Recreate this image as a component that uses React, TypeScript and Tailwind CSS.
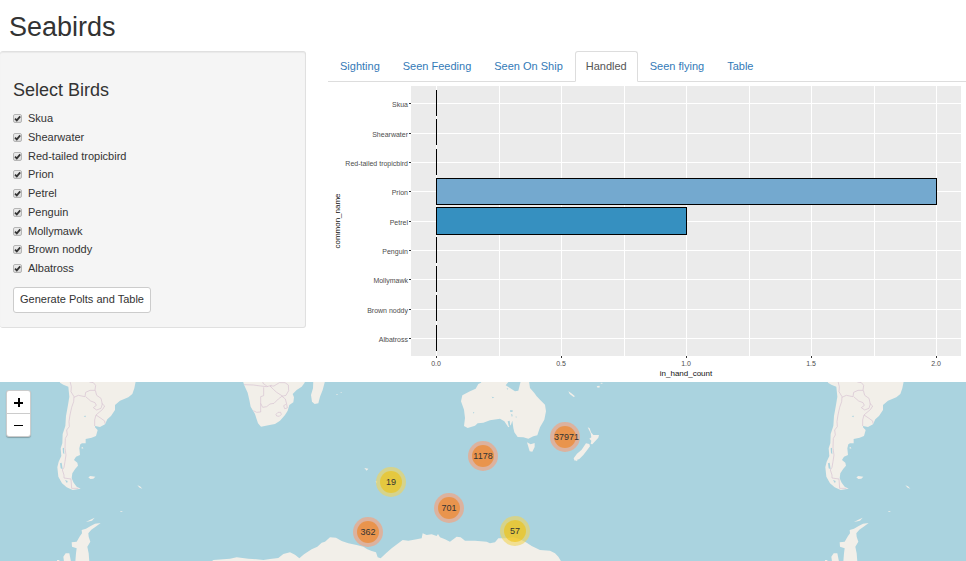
import { useState } from "react";

const birds = [
  "Skua",
  "Shearwater",
  "Red-tailed tropicbird",
  "Prion",
  "Petrel",
  "Penguin",
  "Mollymawk",
  "Brown noddy",
  "Albatross",
];

const tabs = ["Sighting", "Seen Feeding", "Seen On Ship", "Handled", "Seen flying", "Table"];

function BirdCheckbox({ name }: { name: string }) {
  return (
    <label className="flex items-center gap-[6px] leading-[15px]">
      <span className="grid shrink-0 place-items-center">
        <input
          type="checkbox"
          defaultChecked
          className="peer col-start-1 row-start-1 size-[9px] appearance-none rounded-[2px] border border-[#b5b5b5] bg-linear-to-b from-[#ececec] to-[#d9d9d9]"
        />
        <svg
          viewBox="0 0 9 9"
          className="pointer-events-none invisible col-start-1 row-start-1 size-[9px] peer-checked:visible"
          aria-hidden="true"
        >
          <path d="M2 4.6 3.8 6.4 7.2 2.4" fill="none" stroke="#333" strokeWidth="1.7" />
        </svg>
      </span>
      {name}
    </label>
  );
}

function Sidebar() {
  return (
    <form
      className="w-[306px] shrink-0 self-start rounded-[3px] border border-l-0 border-[#e0e0e0] bg-[#f5f5f5] pt-[27px] pr-3 pb-[14px] pl-[13px] shadow-[inset_0_1px_1px_rgba(0,0,0,0.05)]"
      onSubmit={(e) => e.preventDefault()}
    >
      <h2 className="text-[18px] leading-[22px] font-normal">Select Birds</h2>
      <fieldset className="mt-[10px] flex h-[165px] flex-col justify-between">
        {birds.map((b) => (
          <BirdCheckbox key={b} name={b} />
        ))}
      </fieldset>
      <button
        type="submit"
        className="mt-[11px] h-[26px] rounded-[3px] border border-[#ccc] bg-white px-[6px] pb-px leading-[15px]"
      >
        Generate Polts and Table
      </button>
    </form>
  );
}

const rowY = [21, 51, 80, 109, 139, 168, 197, 227, 256];
const barTop = [8, 37, 67, 96, 125, 155, 184, 213, 243];
const gridX = [108, 171, 233, 296, 358, 421, 483, 546, 608];
const counts = [0, 0, 0, 2, 1, 0, 0, 0, 0];
const fills = ["", "", "", "#74a9cf", "#3690c0", "", "", "", ""];

function HandledChart() {
  return (
    <svg
      viewBox="0 0 638 300"
      className="block h-auto w-full"
      role="img"
      aria-label="in_hand_count by common_name"
      fontFamily='"Liberation Sans", Arial, sans-serif'
    >
      <g shapeRendering="crispEdges">
        <rect x="83" y="4" width="550" height="270" fill="#ebebeb" />
        {gridX.map((x) => (
          <rect key={x} x={x} y="4" width="1" height="270" fill="#fff" />
        ))}
        {rowY.map((y) => (
          <g key={y}>
            <rect x="83" y={y} width="550" height="1" fill="#fff" />
            <rect x="81" y={y} width="2" height="1" fill="#333" />
          </g>
        ))}
        {[108, 233, 358, 483, 608].map((x) => (
          <rect key={x} x={x} y="274" width="1" height="2" fill="#333" />
        ))}
        {counts.map((c, i) =>
          c === 0 ? (
            <rect key={i} x="108" y={barTop[i]} width="1" height="26" fill="#000" />
          ) : (
            <rect
              key={i}
              x="108.5"
              y={barTop[i] + 0.5}
              width={c * 250}
              height={i === 4 ? 27 : 26}
              fill={fills[i]}
              stroke="#000"
            />
          ),
        )}
      </g>
      <g fontSize="7" fill="#4d4d4d">
        {birds.map((b, i) => (
          <text key={b} x="80" y={rowY[i] + 4} textAnchor="end">
            {b}
          </text>
        ))}
        {["0.0", "0.5", "1.0", "1.5", "2.0"].map((t, i) => (
          <text key={t} x={108 + i * 125} y="284" textAnchor="middle">
            {t}
          </text>
        ))}
      </g>
      <g fontSize="8" fill="#111">
        <text x="358" y="294" textAnchor="middle">
          in_hand_count
        </text>
        <text transform="translate(12 139) rotate(-90)" textAnchor="middle">
          common_name
        </text>
      </g>
    </svg>
  );
}

function ChartPanel() {
  const [active, setActive] = useState("Handled");
  return (
    <main className="min-w-0 flex-1">
      <div role="tablist" className="flex h-[31px] gap-px border-b border-[#ddd] pl-px">
        {tabs.map((t) => (
          <button
            key={t}
            type="button"
            role="tab"
            aria-selected={t === active}
            onClick={() => setActive(t)}
            className={
              t === active
                ? "h-[31px] rounded-t-[3px] border border-[#ddd] border-b-white bg-white px-[10px] text-[#555]"
                : "h-[31px] rounded-t-[3px] border border-transparent px-[10px] text-[#337ab7]"
            }
          >
            {t}
          </button>
        ))}
      </div>
      <HandledChart />
    </main>
  );
}

function World() {
  return (
    <g>
      {/* South America */}
      <g transform="translate(0 -2) scale(0.33333)">
        <path d="M178,0 L180,8 190,14 205,20 208,50 204,75 198,108 196,138 188,162 187,190 182,205 184,228 176,245 172,262 175,290 186,310 200,322 218,330 242,326 230,320 221,308 215,295 217,280 226,266 234,257 232,248 222,240 228,230 240,225 238,205 241,193 246,190 257,190 257,177 275,173 288,168 293,150 285,142 285,138 300,141 315,133 322,118 333,108 345,90 345,75 360,62 385,52 397,42 403,25 408,0 Z" />
        <path d="M265,292 l6,-4 15,2 -6,6 -9,1z M412,316 l8,3 7,7 -8,-3z M243,204 l5,-3 2,5z M258,426 l10,-5 16,-8 -8,9z M300,404 l10,-2 M361,394 h6v2h-6z" />
        <path d="M226,545 L228,520 230,505 216,500 215,487 230,485 240,468 246,460 245,450 258,446 272,438 285,431 302,429 290,438 274,449 265,460 266,470 271,485 262,500 266,520 268,545 Z M192,545 L190,530 197,520 208,520 213,545Z M171,540 h7v5h-7z" />
        <path fill="#aad3df" d="M251,108 l7,-1 -2,5z M180,250 l5,-2 3,20 -6,-3z M195,300 l8,3 -2,7z M188,205 l4,-2 1,20 -4,-4z" />
        <g fill="none" stroke="#d9c6d3" strokeWidth="2.2">
          <path d="M209,0 L214,20 213,35 222,50 221,65 215,82 210,105 207,125 208,140 200,150 202,165 196,175 195,205 198,225 195,245 192,262 187,270 192,285 192,294 213,297 215,325 235,325" />
          <path d="M222,52 L235,46 255,50 257,37 270,31 285,31 287,16 280,8 268,6" />
          <path d="M257,50 L272,63 285,68 289,76 280,83 290,90 303,85 307,72 303,55 290,46 286,31" />
          <path d="M305,70 L314,78 308,88 288,105 284,120 284,138" />
          <path d="M288,105 L303,115 314,123 315,131" />
        </g>
      </g>
      {/* Southern Africa and Madagascar */}
      <g transform="translate(230 -2) scale(0.33333)">
        <path d="M38,0 L42,14 53,38 58,60 62,80 75,102 80,118 84,130 93,140 115,136 135,132 150,122 165,105 173,92 178,75 190,67 192,52 188,42 200,30 215,20 224,8 224,0Z" />
        <path d="M250,0 L249,25 243,45 246,65 254,72 265,70 270,50 278,30 286,0Z M319,42 h4v2h-4z M332,37 h3v2h-3z M403,264 l12,2 -5,6z M437,303 l5,2 -3,4z M645,543 l2,-9 8,0 4,9z" />
        <g fill="none" stroke="#d9c6d3" strokeWidth="2.2">
          <path d="M42,14 L70,15 92,18 110,20 125,16 M98,0 L99,10 113,20 M101,22 L101,47 92,50 92,96 80,97 70,92" />
          <path d="M92,70 L98,82 110,80 120,72 132,70 145,57 157,48 140,37 130,28 120,18" />
          <path d="M120,18 L132,18 148,8 165,8 175,15 176,32 168,46 156,49 166,57 170,72 172,84 164,86 161,77 168,73" />
          <path d="M138,103 l6,-6 8,0 2,6 -6,6 -8,-1z" />
        </g>
      </g>
      {/* Australia, Tasmania and New Zealand */}
      <g transform="translate(455 -4) scale(0.33333)">
        <path d="M84,0 L78,14 70,18 62,32 45,40 22,52 18,70 27,95 30,120 27,144 38,150 60,143 68,136 85,134 105,127 135,122 148,130 160,148 168,140 172,128 175,150 178,163 188,177 205,178 220,182 235,175 247,172 255,148 268,125 273,100 270,80 255,65 245,55 238,45 225,30 222,10 218,0 L200,0 195,18 190,38 180,40 165,30 152,22 160,12 160,0 Z" />
        <path d="M216,193 l11,6 12,-4 0,12 -7,14 -8,-1z M340,40 l8,5 12,10 -4,2 -12,-9z M425,25 l8,-2 2,5 -7,1z M435,15 l7,-1 0,4z" />
        <path d="M398,148 l6,3 4,12 7,8 17,0 -2,8 -9,10 -9,10 -5,-1 2,-10 -6,-6 6,-4 -2,-12z M393,196 l10,2 2,7 -9,12 -11,14 -12,12 -14,5 -3,-7 10,-14 14,-12z M362,247 l6,-1 -3,4z" />
        <path fill="#aad3df" d="M110,56 l8,2 -5,3z M155,30 l5,2 -3,3z M165,97 l8,0 0,4 -7,1z M168,108 l5,2 -2,8z M182,115 l3,1 -2,5z M158,130 l6,-2 2,18 -5,-3z M54,102 l4,1 -2,4z" />
      </g>
      {/* Antarctic coast */}
      <g transform="translate(230 -2) scale(0.33333)">
        <path d="M-60,548 L-50,540 -20,538 0,536 20,532 55,536 80,538 100,540 120,537 145,534 160,522 180,517 195,524 208,535 222,523 245,508 262,500 275,488 285,485 300,472 318,473 335,483 355,490 380,495 400,500 412,508 425,513 438,517 443,532 452,535 468,520 485,505 505,490 518,480 535,482 560,478 575,475 578,460 590,465 605,463 620,468 624,462 630,472 645,478 660,485 680,470 692,472 705,482 735,482 770,485 780,490 795,487 805,475 825,475 850,472 870,478 890,488 905,498 930,510 960,512 975,520 985,530 994,545 994,560 -60,560Z" />
      </g>
    </g>
  );
}

const clusters = [
  { label: "19", x: 391, y: 100, big: false },
  { label: "362", x: 368, y: 150, big: true },
  { label: "701", x: 449, y: 126, big: true },
  { label: "1178", x: 483, y: 74, big: true },
  { label: "37971", x: 565, y: 55, big: true },
  { label: "57", x: 515, y: 149, big: false },
];

function SightingsMap() {
  return (
    <section aria-label="Map" className="relative min-h-[179px] flex-1 overflow-hidden bg-[#aad3df]">
      <svg className="absolute inset-0 size-full" aria-hidden="true">
        <svg x="50%" overflow="visible" fill="#f2efe9">
          {[-1251, -483, 285, 1053].map((dx) => (
            <g key={dx} transform={`translate(${dx} 0)`}>
              <World />
            </g>
          ))}
        </svg>
      </svg>
      {clusters.map((c) => (
        <button
          key={c.label}
          type="button"
          style={{ left: `calc(50% + ${c.x - 498}px)`, top: c.y - 15 }}
          className={
            c.big
              ? "absolute grid size-[30px] place-items-center rounded-full bg-[#fd9c73]/60"
              : "absolute grid size-[30px] place-items-center rounded-full bg-[#f1d357]/60"
          }
        >
          <span
            className={
              c.big
                ? "grid size-[22px] place-items-center rounded-full bg-[#f18017]/60 text-[9px] leading-[22px]"
                : "grid size-[22px] place-items-center rounded-full bg-[#f0c20c]/60 text-[9px] leading-[22px]"
            }
          >
            {c.label}
          </span>
        </button>
      ))}
      <div className="absolute top-2 left-[6px] flex flex-col rounded-[3px] border border-black/20 bg-white shadow-[0_1px_1px_rgba(0,0,0,0.25)]">
        <button type="button" aria-label="Zoom in" className="grid h-[23px] w-[23px] place-items-center border-b border-[#ccc]">
          <svg viewBox="0 0 11 11" className="size-[11px]" shapeRendering="crispEdges">
            <path d="M1 5h9v2H1z M5 1h2v9H5z" fill="#000" />
          </svg>
        </button>
        <button type="button" aria-label="Zoom out" className="grid h-[22px] w-[23px] place-items-center">
          <svg viewBox="0 0 11 11" className="size-[11px]" shapeRendering="crispEdges">
            <path d="M1 5h9v1H1z" fill="#000" />
          </svg>
        </button>
      </div>
    </section>
  );
}

export default function App() {
  return (
    <div className="flex min-h-screen flex-col bg-white font-['Liberation_Sans',Arial,sans-serif] text-[11px] text-[#333]">
      <h1 className="px-[9px] pt-[12px] pb-[9px] text-[27px] leading-[30px] font-normal">Seabirds</h1>
      <div className="flex gap-[22px]">
        <Sidebar />
        <ChartPanel />
      </div>
      <SightingsMap />
    </div>
  );
}
